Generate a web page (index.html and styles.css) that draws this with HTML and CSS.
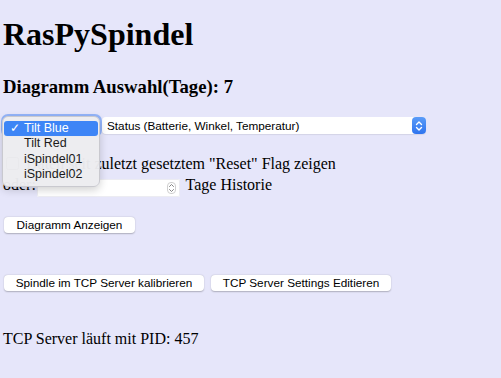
FILE: index.html
```html
<!DOCTYPE html>
<html lang="de">
<head>
    <meta charset="UTF-8">
    <meta name="viewport" content="width=device-width, initial-scale=1.0">
    <title>RasPySpindel</title>
    <link rel="stylesheet" href="styles.css">
</head>
<body>
    <h1>RasPySpindel</h1>
    <h3>Diagramm Auswahl(Tage): 7</h3>

    <form class="chart-form">
        <div class="select-row">
            <select class="select spindle-select">
                <option>Tilt Blue</option>
                <option>Tilt Red</option>
                <option>iSpindel01</option>
                <option>iSpindel02</option>
            </select>
            <div class="select chart-select">
                <span>Status (Batterie, Winkel, Temperatur)</span>
                <span class="stepper">
                    <svg width="8" height="12" viewBox="0 0 8 12">
                        <path d="M1.5 4.5 L4 2 L6.5 4.5 M1.5 7.5 L4 10 L6.5 7.5" fill="none" stroke="#fff" stroke-width="1.4" stroke-linecap="round" stroke-linejoin="round"/>
                    </svg>
                </span>
            </div>
        </div>

        <p class="line reset-line">
            <input type="checkbox" class="check"> Daten seit zuletzt gesetztem "Reset" Flag zeigen
        </p>
        <p class="line days-line">
            oder: <span class="number-input"><span class="spin">
                <svg width="7" height="10" viewBox="0 0 7 10">
                    <path d="M1.5 3.5 L3.5 1.5 L5.5 3.5 M1.5 6.5 L3.5 8.5 L5.5 6.5" fill="none" stroke="#777" stroke-width="0.9" stroke-linecap="round"/>
                </svg>
            </span></span> Tage Historie
        </p>

        <div class="btn-row show-row">
            <button type="button" class="btn btn-show">Diagramm Anzeigen</button>
        </div>
    </form>

    <div class="btn-row tcp-row">
        <button type="button" class="btn btn-calib">Spindle im TCP Server kalibrieren</button>
        <button type="button" class="btn btn-settings">TCP Server Settings Editieren</button>
    </div>

    <p class="status">TCP Server läuft mit PID: 457</p>

    <!-- open popup of the first select -->
    <div class="popup">
        <div class="popup-item active"><span class="tick">✓</span>Tilt Blue</div>
        <div class="popup-item">Tilt Red</div>
        <div class="popup-item">iSpindel01</div>
        <div class="popup-item">iSpindel02</div>
    </div>
</body>
</html>
```

FILE: styles.css
```css
/* Main Styling */
* {
    box-sizing: border-box;
}

body {
    margin: 0;
    padding: 0 3px;
    background: #e6e6fa;
    font-family: 'Liberation Serif', 'Times New Roman', serif;
    font-size: 16px;
    color: #000;
    position: relative;
    min-height: 378px;
}

h1 {
    font-size: 32px;
    line-height: 37px;
    margin: 16px 0 0;
}

h3 {
    font-size: 18.72px;
    line-height: 22px;
    margin: 23px 0 0;
}

/* Selects */
.select-row {
    display: flex;
    gap: 3px;
    margin-top: 19px;
    height: 17px;
}

.select {
    height: 17px;
    background: #fff;
    border: none;
    border-radius: 4px;
    font-family: 'Liberation Sans', Arial, sans-serif;
    font-size: 11.75px;
    color: #000;
}

.spindle-select {
    -webkit-appearance: none;
    appearance: none;
    width: 95px;
    margin-left: 1px;
    padding: 0 5px;
    box-shadow: 0 0 0 3px rgba(80, 140, 250, 0.55);
}

.chart-select {
    width: 324px;
    display: flex;
    align-items: center;
    justify-content: space-between;
    padding-left: 5px;
    box-shadow: 0 1px 1px rgba(0, 0, 0, 0.08);
}

.stepper {
    width: 14px;
    height: 17px;
    border-radius: 4px;
    background: linear-gradient(#5a9cf8, #2f74ef);
    display: flex;
    align-items: center;
    justify-content: center;
}

/* Text lines */
.line {
    margin: 0;
    line-height: 20px;
}

.reset-line {
    margin-top: 20px;
}

.check {
    margin: 0 3px 0 3px;
    vertical-align: -1px;
}

.days-line {
    margin-top: 1px;
}

.number-input {
    display: inline-flex;
    align-items: center;
    justify-content: flex-end;
    width: 143px;
    height: 18px;
    margin-left: -3px;
    margin-right: 2px;
    vertical-align: -3px;
    background: #fff;
    border-radius: 2px;
    box-shadow: inset 0 0 0 1px #ececf2;
    padding-right: 4px;
}

.spin {
    display: flex;
    width: 9px;
    height: 12px;
    border: 1px solid #cfcfcf;
    border-radius: 4px;
    align-items: center;
    justify-content: center;
}

/* Buttons */
.btn-row {
    display: flex;
    gap: 7px;
    padding-left: 1px;
}

.show-row {
    margin-top: 20px;
}

.tcp-row {
    margin-top: 42px;
}

.btn {
    height: 16px;
    padding: 0;
    margin: 0;
    background: #fff;
    border: none;
    border-radius: 4px;
    box-shadow: 0 0.5px 1.5px rgba(0, 0, 0, 0.25);
    font-family: 'Liberation Sans', Arial, sans-serif;
    font-size: 11.75px;
    color: #000;
    line-height: 16px;
    text-align: center;
}

.btn-show { width: 131px; }
.btn-calib { width: 200px; }
.btn-settings { width: 180px; }

.status {
    margin: 38px 0 0;
    line-height: 20px;
}

/* Open select popup */
.popup {
    position: absolute;
    left: 2px;
    top: 116px;
    width: 98px;
    height: 71px;
    padding: 4px 1px;
    background: rgba(236, 236, 240, 0.97);
    border: 1px solid #c9c9cf;
    border-radius: 6px;
    box-shadow: 0 3px 8px rgba(0, 0, 0, 0.18);
    font-family: 'Liberation Sans', Arial, sans-serif;
    font-size: 12.5px;
    color: #1a1a1a;
}

.popup-item {
    height: 15.3px;
    line-height: 15.3px;
    padding-left: 20px;
    position: relative;
}

.popup-item.active {
    background: #3d85f6;
    color: #fff;
    border-radius: 3px;
}

.tick {
    position: absolute;
    left: 6px;
    font-size: 11.5px;
}
```
